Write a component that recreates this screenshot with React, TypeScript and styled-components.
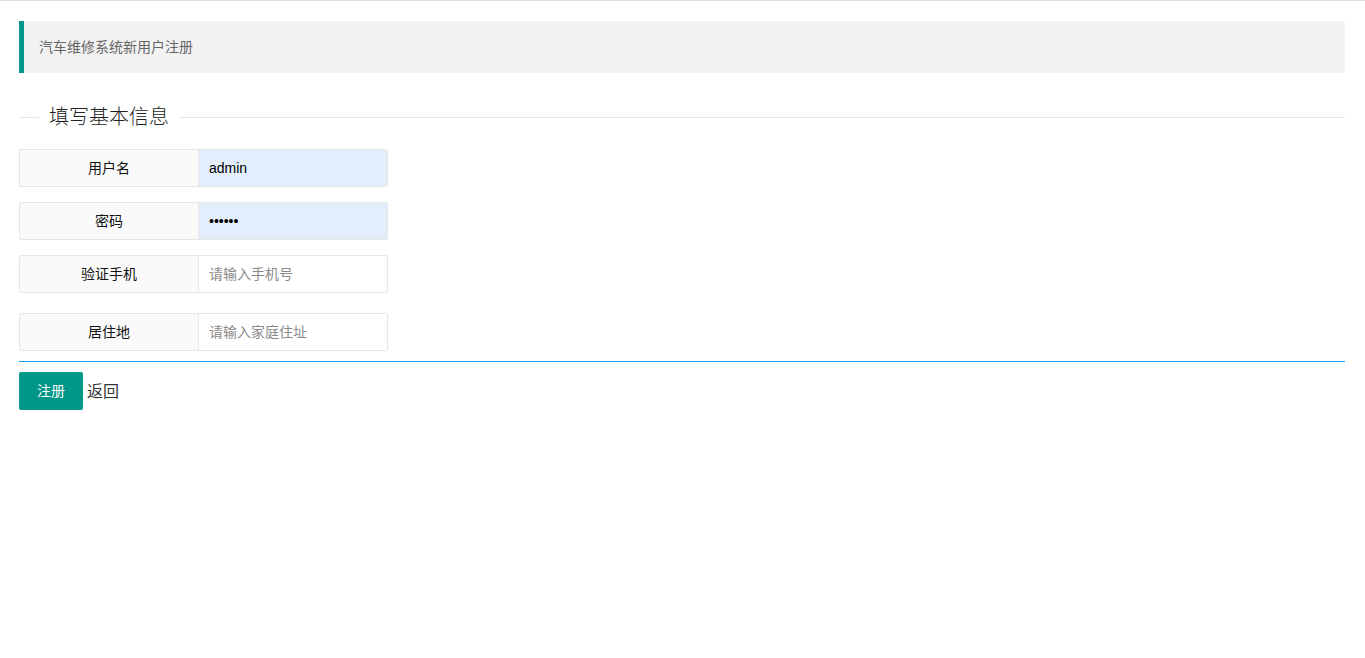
import styled, { createGlobalStyle } from "styled-components";

const GlobalStyle = createGlobalStyle`
  html, body {
    margin: 0;
    padding: 0;
    background: #fff;
  }
  body {
    font-family: "Liberation Sans", "Noto Sans CJK SC", sans-serif;
    font-size: 14px;
    color: #333;
  }
`;

const Page = styled.div`
  border-top: 1px solid #d9dde2;
  padding: 20px 20px 0 19px;
`;

const Notice = styled.blockquote`
  margin: 0;
  padding: 15px;
  line-height: 22px;
  font-size: 14px;
  color: #666;
  background-color: #f2f2f2;
  border-left: 5px solid #009688;
  border-radius: 0 2px 2px 0;
`;

const SectionTitle = styled.div`
  display: flex;
  align-items: center;
  height: 28px;
  margin: 30px 0 18px;
`;

const Line = styled.span<{ $grow?: boolean }>`
  height: 1px;
  background: #e6e6e6;
  width: 20px;
  flex: ${(p) => (p.$grow ? "1" : "none")};
`;

const Legend = styled.span`
  padding: 0 10px;
  font-size: 20px;
  font-weight: 300;
  line-height: 28px;
  color: #222;
`;

const FormRow = styled.div<{ $gap?: number }>`
  display: flex;
  margin-bottom: ${(p) => p.$gap ?? 15}px;
`;

const Label = styled.label`
  box-sizing: border-box;
  width: 180px;
  height: 38px;
  line-height: 36px;
  text-align: center;
  font-size: 14px;
  color: #111;
  background-color: #fafafa;
  border: 1px solid #e6e6e6;
  border-radius: 2px 0 0 2px;
`;

const Input = styled.input<{ $filled?: boolean }>`
  box-sizing: border-box;
  width: 190px;
  height: 38px;
  margin: 0 0 0 -1px;
  padding: 0 10px;
  font-family: "Liberation Sans", "Noto Sans CJK SC", sans-serif;
  font-size: 14px;
  color: #000;
  background-color: ${(p) => (p.$filled ? "#e3eefd" : "#fff")};
  border: 1px solid #e6e6e6;
  border-radius: 0 2px 2px 0;
  outline: none;
  &::placeholder {
    color: #8a8a8a;
  }
`;

const Divider = styled.hr`
  margin: 10px 0;
  height: 0;
  border: 0;
  border-top: 1px solid #1e9fff;
`;

const Actions = styled.div`
  display: flex;
  align-items: center;
  gap: 4px;
`;

const Button = styled.button`
  height: 38px;
  line-height: 38px;
  padding: 0 18px;
  border: 0;
  border-radius: 2px;
  background-color: #009688;
  color: #fff;
  font-family: "Liberation Sans", "Noto Sans CJK SC", sans-serif;
  font-size: 14px;
  cursor: pointer;
`;

const BackLink = styled.a`
  padding-bottom: 2px;
  font-size: 16px;
  color: #333;
  text-decoration: none;
  cursor: pointer;
`;

const fields = [
  { label: "用户名", type: "text", value: "admin", placeholder: "" },
  { label: "密码", type: "password", value: "123456", placeholder: "" },
  { label: "验证手机", type: "text", value: "", placeholder: "请输入手机号" },
  { label: "居住地", type: "text", value: "", placeholder: "请输入家庭住址" },
];

function App() {
  return (
    <Page>
      <GlobalStyle />
      <Notice>汽车维修系统新用户注册</Notice>
      <SectionTitle>
        <Line />
        <Legend>填写基本信息</Legend>
        <Line $grow />
      </SectionTitle>
      <form onSubmit={(e) => e.preventDefault()}>
        {fields.map((f, i) => (
          <FormRow key={f.label} $gap={i === 2 ? 20 : i === 3 ? 0 : 15}>
            <Label>{f.label}</Label>
            <Input
              type={f.type}
              defaultValue={f.value}
              placeholder={f.placeholder}
              $filled={!!f.value}
            />
          </FormRow>
        ))}
        <Divider />
        <Actions>
          <Button type="submit">注册</Button>
          <BackLink>返回</BackLink>
        </Actions>
      </form>
    </Page>
  );
}

export default App;
